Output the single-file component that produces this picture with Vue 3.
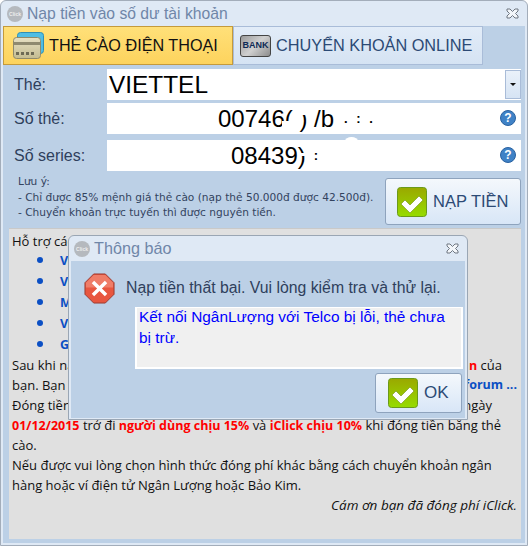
<template>
  <div class="window">
    <div class="titlebar">
      <span class="logo">Click</span>
      <span class="title">Nạp tiền vào số dư tài khoản</span>
      <svg class="close" width="13" height="11" viewBox="0 0 13 11"><path d="M1 1h3l2.500 2.500L9 1h3v2L9.500 5.500 12 8v2H9L6.500 7.500 4 10H1V8l2.500-2.500L1 3z" fill="#f3f6fa" stroke="#6f7781" stroke-width="1"/></svg>
    </div>

    <div class="tabs">
      <div class="tab active">
        <svg width="32" height="28" viewBox="0 0 32 28">
          <defs>
            <linearGradient id="beige" x1="0" y1="0" x2="0" y2="1">
              <stop offset="0" stop-color="#e6e0c4"/>
              <stop offset="1" stop-color="#c4bc92"/>
            </linearGradient>
          </defs>
          <rect x="4.500" y="0.500" width="26" height="21" rx="3" fill="#4fbde4" stroke="#2f8fb5"/>
          <rect x="0.500" y="5.500" width="27" height="21" rx="3" fill="url(#beige)" stroke="#8f8a6c"/>
          <rect x="1" y="10" width="26" height="3" fill="#8f8a70"/>
          <rect x="3" y="20" width="3" height="3" fill="#6e6a55"/><rect x="8" y="20" width="3" height="3" fill="#6e6a55"/><rect x="13" y="20" width="3" height="3" fill="#6e6a55"/><rect x="18" y="20" width="3" height="3" fill="#6e6a55"/>
        </svg>
        <span>THẺ CÀO ĐIỆN THOẠI</span>
      </div>
      <div class="tab">
        <div class="bank"><span>BANK</span></div>
        <span>CHUYỂN KHOẢN ONLINE</span>
      </div>
    </div>

    <div class="main">
      <div class="row">
        <label>Thẻ:</label>
        <div class="field select">
          <span>VIETTEL</span>
          <div class="arrow"></div>
        </div>
      </div>
      <div class="row">
        <label>Số thẻ:</label>
        <div class="field number">
          <span class="digits first">00746( ) /b</span>
          <span class="specks s1">.  :  .</span>
          <i class="blob b1"></i>
          <i class="blob b1b"></i>
          <svg class="help" width="16" height="16" viewBox="0 0 16 16"><circle cx="8" cy="8" r="7.500" fill="#3f82c6" stroke="#2a62a0"/><text x="8" y="12" text-anchor="middle" class="q">?</text></svg>
        </div>
      </div>
      <div class="row gap">
        <label>Số series:</label>
        <div class="field number">
          <span class="digits second">08439)</span>
          <span class="specks s2">:</span>
          <i class="blob b2"></i>
          <i class="blob b2b"></i>
          <svg class="help" width="16" height="16" viewBox="0 0 16 16"><circle cx="8" cy="8" r="7.500" fill="#3f82c6" stroke="#2a62a0"/><text x="8" y="12" text-anchor="middle" class="q">?</text></svg>
        </div>
      </div>

      <div class="note-row">
        <div class="note">
          <div>Lưu ý:</div>
          <div>- Chỉ được 85% mệnh giá thẻ cào (nạp thẻ 50.000đ được 42.500đ).</div>
          <div>- Chuyển khoản trực tuyến thì được nguyên tiền.</div>
        </div>
        <button class="btn nap">
          <svg width="30" height="30" viewBox="0 0 30 30">
            <defs>
              <linearGradient id="green1" x1="0" y1="0" x2="0" y2="1">
                <stop offset="0" stop-color="#9aa800"/>
                <stop offset="1" stop-color="#96dc00"/>
              </linearGradient>
            </defs>
            <rect x="0.500" y="0.500" width="29" height="29" rx="3" fill="url(#green1)" stroke="#6b9a1a"/>
            <path d="M4 17l4-4 5 5 9-9 4 4-13 13z" fill="#fff" stroke="#6f8f10" stroke-width="0.600" stroke-linejoin="round"/>
          </svg>
          <span>NẠP TIỀN</span>
        </button>
      </div>

      <div class="panel">
        <div class="line">Hỗ trợ các mạng sau:</div>
        <ul>
          <li>Viettel</li>
          <li>Vinaphone</li>
          <li>Mobifone</li>
          <li>Vietnamobile</li>
          <li>Gate</li>
        </ul>
        <div class="line split">
          <span>Sau khi nạp</span>
          <span class="cua"><b class="red">n</b> của</span>
        </div>
        <div class="line split">
          <span>bạn. Bạn</span>
          <b class="blue">forum ...</b>
        </div>
        <div class="line split">
          <span>Đóng tiền</span>
          <span class="ngay">ngày</span>
        </div>
        <div class="line"><b class="red">01/12/2015</b> trở đi <b class="red">người dùng chịu 15%</b> và <b class="red">iClick chịu 10%</b> khi đóng tiền bằng thẻ</div>
        <div class="line">cào.</div>
        <div class="line">Nếu được vui lòng chọn hình thức đóng phí khác bằng cách chuyển khoản ngân</div>
        <div class="line">hàng hoặc ví điện tử Ngân Lượng hoặc Bảo Kim.</div>
        <div class="line thanks">Cám ơn bạn đã đóng phí iClick.</div>
      </div>
    </div>

    <div class="dialog">
      <div class="titlebar dialog-title">
        <span class="logo">Click</span>
        <span class="title">Thông báo</span>
        <svg class="close" width="13" height="11" viewBox="0 0 13 11"><path d="M1 1h3l2.500 2.500L9 1h3v2L9.500 5.500 12 8v2H9L6.500 7.500 4 10H1V8l2.500-2.500L1 3z" fill="#f3f6fa" stroke="#6f7781" stroke-width="1"/></svg>
      </div>
      <div class="dialog-body">
        <div class="message">
          <svg width="31" height="31" viewBox="0 0 32 32">
            <path d="M10 1h12l9 9v12l-9 9H10l-9-9V10z" fill="#e8563f" stroke="#9a3a30"/>
            <path d="M10 2h12l8 8v5H2v-5z" fill="#ef7d68"/>
            <path d="M10.500 8L16 13.500 21.500 8 24 10.500 18.500 16 24 21.500 21.500 24 16 18.500 10.500 24 8 21.500 13.500 16 8 10.500z" fill="#fff"/>
          </svg>
          <span>Nạp tiền thất bại. Vui lòng kiểm tra và thử lại.</span>
        </div>
        <div class="detail"><div class="detail-text">Kết nối NgânLượng với Telco bị lỗi, thẻ chưa bị trừ.</div></div>
        <div class="actions">
          <button class="btn ok">
            <svg width="30" height="30" viewBox="0 0 30 30">
              <defs>
                <linearGradient id="green2" x1="0" y1="0" x2="0" y2="1">
                  <stop offset="0" stop-color="#9aa800"/>
                  <stop offset="1" stop-color="#96dc00"/>
                </linearGradient>
              </defs>
              <rect x="0.500" y="0.500" width="29" height="29" rx="3" fill="url(#green2)" stroke="#6b9a1a"/>
              <path d="M4 17l4-4 5 5 9-9 4 4-13 13z" fill="#fff" stroke="#6f8f10" stroke-width="0.600" stroke-linejoin="round"/>
            </svg>
            <span>OK</span>
          </button>
        </div>
      </div>
    </div>
  </div>
</template>

<script setup>
</script>

<style scoped>
.window {
  position: relative;
  box-sizing: border-box;
  width: 528px;
  height: 546px;
  padding: 0 2px 2px;
  background: #dfe9f5;
  border: 1px solid #a3adba;
  border-radius: 6px 6px 0 0;
  font-family: "Liberation Sans", Arial, sans-serif;
  overflow: hidden;
}
.titlebar {
  display: flex;
  align-items: center;
  height: 25px;
  padding-left: 4px;
}
.logo {
  display: block;
  width: 16px;
  height: 16px;
  border-radius: 50%;
  background: #b5b9be;
  color: #eee;
  font-size: 5px;
  font-weight: bold;
  line-height: 16px;
  text-align: center;
}
.title {
  margin-left: 4px;
  font-size: 15.700px;
  color: #6f86a8;
}
.close {
  margin-left: auto;
  margin-right: 6px;
}
.tabs {
  display: flex;
  height: 39px;
  background: #bcd0e6;
}
.tab {
  box-sizing: border-box;
  display: flex;
  align-items: center;
  gap: 5px;
  width: 250px;
  padding-left: 6px;
  background: linear-gradient(#e2ecf8, #d5e3f3);
  border: 1px solid #a9bcd8;
  font-size: 16.300px;
  color: #2c4a75;
  white-space: nowrap;
}
.tab.active {
  width: 230px;
  padding-left: 9px;
  gap: 4px;
  background: linear-gradient(#ffe079, #fdd35d);
  border-color: #c49a3c;
  color: #111;
  font-size: 16.200px;
}
.bank {
  box-sizing: border-box;
  width: 31px;
  height: 22px;
  border-radius: 3px;
  background: linear-gradient(135deg, #9a9a9a, #d0d0d0 50%, #8c8c8c);
  border: 1px solid #444;
  color: #0f2a55;
  font-size: 9px;
  font-weight: bold;
  line-height: 19px;
  text-align: center;
}
.main {
  box-sizing: border-box;
  height: 478px;
  padding: 4px 4px 4px 6px;
  background: #bcd0e6;
}
.row {
  display: flex;
  align-items: center;
  height: 31px;
  margin-bottom: 3px;
}
.row.gap {
  margin-top: 6px;
  margin-bottom: 0;
}
.row label {
  width: 98px;
  padding-left: 5px;
  box-sizing: border-box;
  font-size: 16px;
  color: #2f3f5c;
}
.field {
  position: relative;
  display: flex;
  align-items: center;
  width: 414px;
  height: 31px;
  background: #fff;
}
.select span {
  padding-left: 2px;
  font-size: 24.400px;
  color: #000;
}
.arrow {
  position: absolute;
  right: 0;
  top: 1px;
  width: 16px;
  height: 29px;
  background: linear-gradient(#eaf1fa, #d6e4f4);
  border: 1px solid #a9bcd8;
  box-sizing: border-box;
}
.arrow::after {
  content: "";
  position: absolute;
  left: 4px;
  top: 12px;
  border-left: 3px solid transparent;
  border-right: 3px solid transparent;
  border-top: 3px solid #111;
}
.digits {
  font-size: 24px;
  color: #000;
  white-space: pre;
}
.digits.first {
  margin-left: 111px;
}
.digits.second {
  margin-left: 124px;
}
.specks {
  font-size: 13px;
  font-weight: bold;
  color: #000;
  white-space: pre;
}
.s1 {
  margin-left: 10px;
  word-spacing: 5px;
}
.s2 {
  margin-left: 8px;
}
.blob {
  position: absolute;
  display: block;
  background: #fff;
}
.b1 {
  left: 175px;
  width: 11px;
  top: 18px;
  height: 11px;
}
.b1b {
  left: 190px;
  width: 12px;
  top: 0;
  height: 12px;
}
.b2 {
  left: 238px;
  width: 13px;
  top: -3px;
  height: 8px;
  border-radius: 50%;
}
.b2b {
  left: 192px;
  width: 10px;
  top: 13px;
  height: 3px;
}
.help {
  position: absolute;
  right: 5px;
  top: 7px;
}
.q {
  font-size: 12px;
  font-weight: bold;
  fill: #fff;
}
.note-row {
  display: flex;
  justify-content: space-between;
  height: 57px;
}
.note {
  padding: 3px 0 0 9px;
  font-family: "DejaVu Sans", sans-serif;
  font-size: 10.600px;
  line-height: 15.500px;
  color: #33435e;
  white-space: nowrap;
}
.btn {
  display: flex;
  align-items: center;
  box-sizing: border-box;
  padding: 0 0 0 11px;
  gap: 6px;
  background: linear-gradient(#f4f8fc, #d8e6f7);
  border: 1px solid #8ea3bd;
  border-radius: 3px;
  color: #2c4a75;
  font-family: inherit;
}
.nap {
  width: 136px;
  height: 47px;
  margin-top: 7px;
  font-size: 16.500px;
}
.panel {
  box-sizing: border-box;
  height: 311px;
  padding: 2px 4px 0 3px;
  background: #e0e0e0;
  border-top: 1px solid #c9c9c9;
  font-family: "Open Sans", sans-serif;
  font-size: 13px;
  color: #111;
}
.panel b {
  font-size: 12.500px;
}
.line {
  height: 20px;
  line-height: 20px;
  white-space: nowrap;
}
.line.split {
  display: flex;
  justify-content: space-between;
}
.cua {
  margin-right: 15px;
}
.ngay {
  margin-right: 25px;
}
.red {
  color: #f00;
}
.blue {
  color: #0b4fc4;
}
ul {
  margin: -1px 0 0;
  padding: 0 0 0 48px;
  list-style: none;
  color: #0b4fc4;
  font-weight: bold;
  font-size: 12.500px;
}
li {
  position: relative;
  height: 21px;
  line-height: 21px;
}
li::before {
  content: "";
  position: absolute;
  left: -23px;
  top: 7px;
  width: 6px;
  height: 6px;
  border-radius: 50%;
  background: #0b4fc4;
}
.thanks {
  font-style: italic;
  font-size: 13.500px;
  text-align: right;
}
.dialog {
  position: absolute;
  left: 67px;
  top: 234px;
  box-sizing: border-box;
  width: 400px;
  height: 185px;
  padding: 0 2px 2px;
  background: #dfe9f5;
  border: 1px solid #9aa6b4;
  border-radius: 6px 6px 0 0;
}
.dialog-title {
  height: 25px;
  padding-left: 3px;
}
.dialog-title .title {
  font-size: 16.200px;
}
.dialog-body {
  box-sizing: border-box;
  height: 157px;
  padding: 11px 0 0;
  background: #bcd0e6;
}
.message {
  display: flex;
  align-items: center;
  gap: 11px;
  padding-left: 13px;
  height: 32px;
  font-size: 15.800px;
  color: #2f3f5c;
}
.detail {
  box-sizing: border-box;
  margin: 3px 0 0 64px;
  width: 328px;
  height: 62px;
  padding: 0 14px 0 2px;
  background: #f0f0f0;
  border: 2px solid #fff;
  border-top-width: 1px;
  font-size: 15.400px;
  line-height: 21px;
  color: #0000ff;
}
.detail-text {
  margin-top: -2px;
}
.actions {
  display: flex;
  justify-content: flex-end;
  padding: 4px 3px 0 0;
}
.ok {
  width: 87px;
  height: 40px;
  padding-left: 12px;
  font-size: 17px;
}
</style>
